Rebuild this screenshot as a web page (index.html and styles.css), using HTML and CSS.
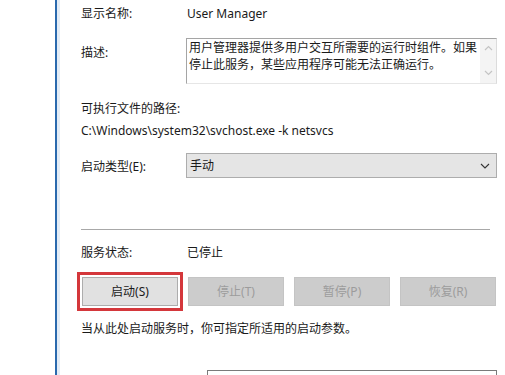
FILE: index.html
```html
<!DOCTYPE html>
<html lang="zh-CN">
<head>
  <meta charset="UTF-8">
  <title>User Manager 的属性</title>
  <link rel="stylesheet" href="styles.css">
</head>
<body>

  <div class="window">
    <div class="gutter"></div>

    <div class="panel">
      <!-- 名称 -->
      <div class="field name-row">
        <span class="label">显示名称:</span>
        <span class="value">User Manager</span>
      </div>

      <!-- 描述 -->
      <div class="field desc-row">
        <span class="label desc-label">描述:</span>
        <div class="textbox">
          <div class="textbox-text">用户管理器提供多用户交互所需要的运行时组件。如果停止此服务，某些应用程序可能无法正确运行。</div>
          <div class="scrollbar">
            <svg width="9" height="6" viewBox="0 0 9 6"><path d="M1 5 L4.5 1.5 L8 5" fill="none" stroke="#c4c4c4" stroke-width="1.2"/></svg>
            <svg width="9" height="6" viewBox="0 0 9 6"><path d="M1 1 L4.5 4.5 L8 1" fill="none" stroke="#c4c4c4" stroke-width="1.2"/></svg>
          </div>
        </div>
      </div>

      <!-- 路径 -->
      <div class="path-block">
        <div class="label">可执行文件的路径:</div>
        <div class="path">C:\Windows\system32\svchost.exe -k netsvcs</div>
      </div>

      <!-- 启动类型 -->
      <div class="field type-row">
        <span class="label">启动类型(E):</span>
        <div class="select">
          <span>手动</span>
          <svg width="10" height="6" viewBox="0 0 10 6"><path d="M1 1 L5 5 L9 1" fill="none" stroke="#333" stroke-width="1.1"/></svg>
        </div>
      </div>

      <hr class="separator">

      <!-- 状态 -->
      <div class="field status-row">
        <span class="label">服务状态:</span>
        <span class="value">已停止</span>
      </div>

      <div class="buttons">
        <button class="btn btn-marked">启动(S)</button>
        <button class="btn" disabled>停止(T)</button>
        <button class="btn" disabled>暂停(P)</button>
        <button class="btn" disabled>恢复(R)</button>
      </div>

      <p class="hint">当从此处启动服务时，你可指定所适用的启动参数。</p>

      <div class="field params-row">
        <span class="label"></span>
        <div class="input"></div>
      </div>
    </div>
  </div>

</body>
</html>
```

FILE: styles.css
```css
body {
  margin: 0;
  height: 375px;
  overflow: hidden;
  background-color: #fff;
  font-family: "Noto Sans", "Noto Sans CJK SC", sans-serif;
  font-size: 12px;
  line-height: 18px;
  color: #1a1a1a;
}
.window {
  display: flex;
  height: 100%;
}
.gutter {
  width: 55px;
  flex: none;
  background-color: #fff;
}
.panel {
  flex: 1;
  border-left: 2px solid #2a69ad;
  background: linear-gradient(to right, #e3ecf6 0, #e3ecf6 3px, #fff 3px);
  padding: 5px 8px 0 24px;
}
.field {
  display: grid;
  grid-template-columns: 105px 1fr;
  align-items: start;
}
.value {
  padding-left: 1px;
}

/* description */
.desc-row {
  margin-top: 15px;
}
.desc-label {
  padding-top: 6px;
}
.textbox {
  display: flex;
  height: 44px;
  border: 1px solid #a5a5a5;
  border-right-color: #dcdcdc;
  border-bottom-color: #e6e6e6;
}
.textbox-text {
  flex: 1;
  padding: 0 2px;
  line-height: 17px;
}
.scrollbar {
  width: 16px;
  background-color: #f4f4f4;
  display: flex;
  flex-direction: column;
  justify-content: space-between;
  align-items: center;
  padding: 6px 0 7px;
}

/* path */
.path-block {
  margin-top: 16px;
}
.path {
  margin-top: 4px;
}

/* startup type */
.type-row {
  margin-top: 13px;
  align-items: center;
}
.type-row .label {
  padding-top: 3px;
}
.select {
  display: flex;
  justify-content: space-between;
  align-items: center;
  height: 23px;
  padding: 0 6px 0 3px;
  background-color: #e5e5e5;
  border: 1px solid #adadad;
}

.separator {
  margin: 51px 7px 0 0;
  border: none;
  border-top: 1px solid #a8a8a8;
  height: 0;
}

.status-row {
  margin-top: 14px;
}

/* buttons */
.buttons {
  display: grid;
  grid-template-columns: repeat(4, 96px);
  column-gap: 10px;
  margin-top: 15px;
  padding-left: 1px;
}
.btn {
  height: 29px;
  font: inherit;
  color: #1a1a1a;
  background-color: #e1e1e1;
  border: 1px solid #adadad;
  padding: 0;
}
.btn:disabled {
  color: #9c9c9c;
  background-color: #cccccc;
  border-color: #c4c4c4;
}
.btn-marked {
  outline: 3px solid #d4373b;
  outline-offset: 2px;
}

.hint {
  margin: 14px 0 0;
}

.params-row {
  margin-top: 32px;
  grid-template-columns: 126px 1fr;
}
.input {
  height: 22px;
  border: 1px solid #7a7a7a;
}
```
